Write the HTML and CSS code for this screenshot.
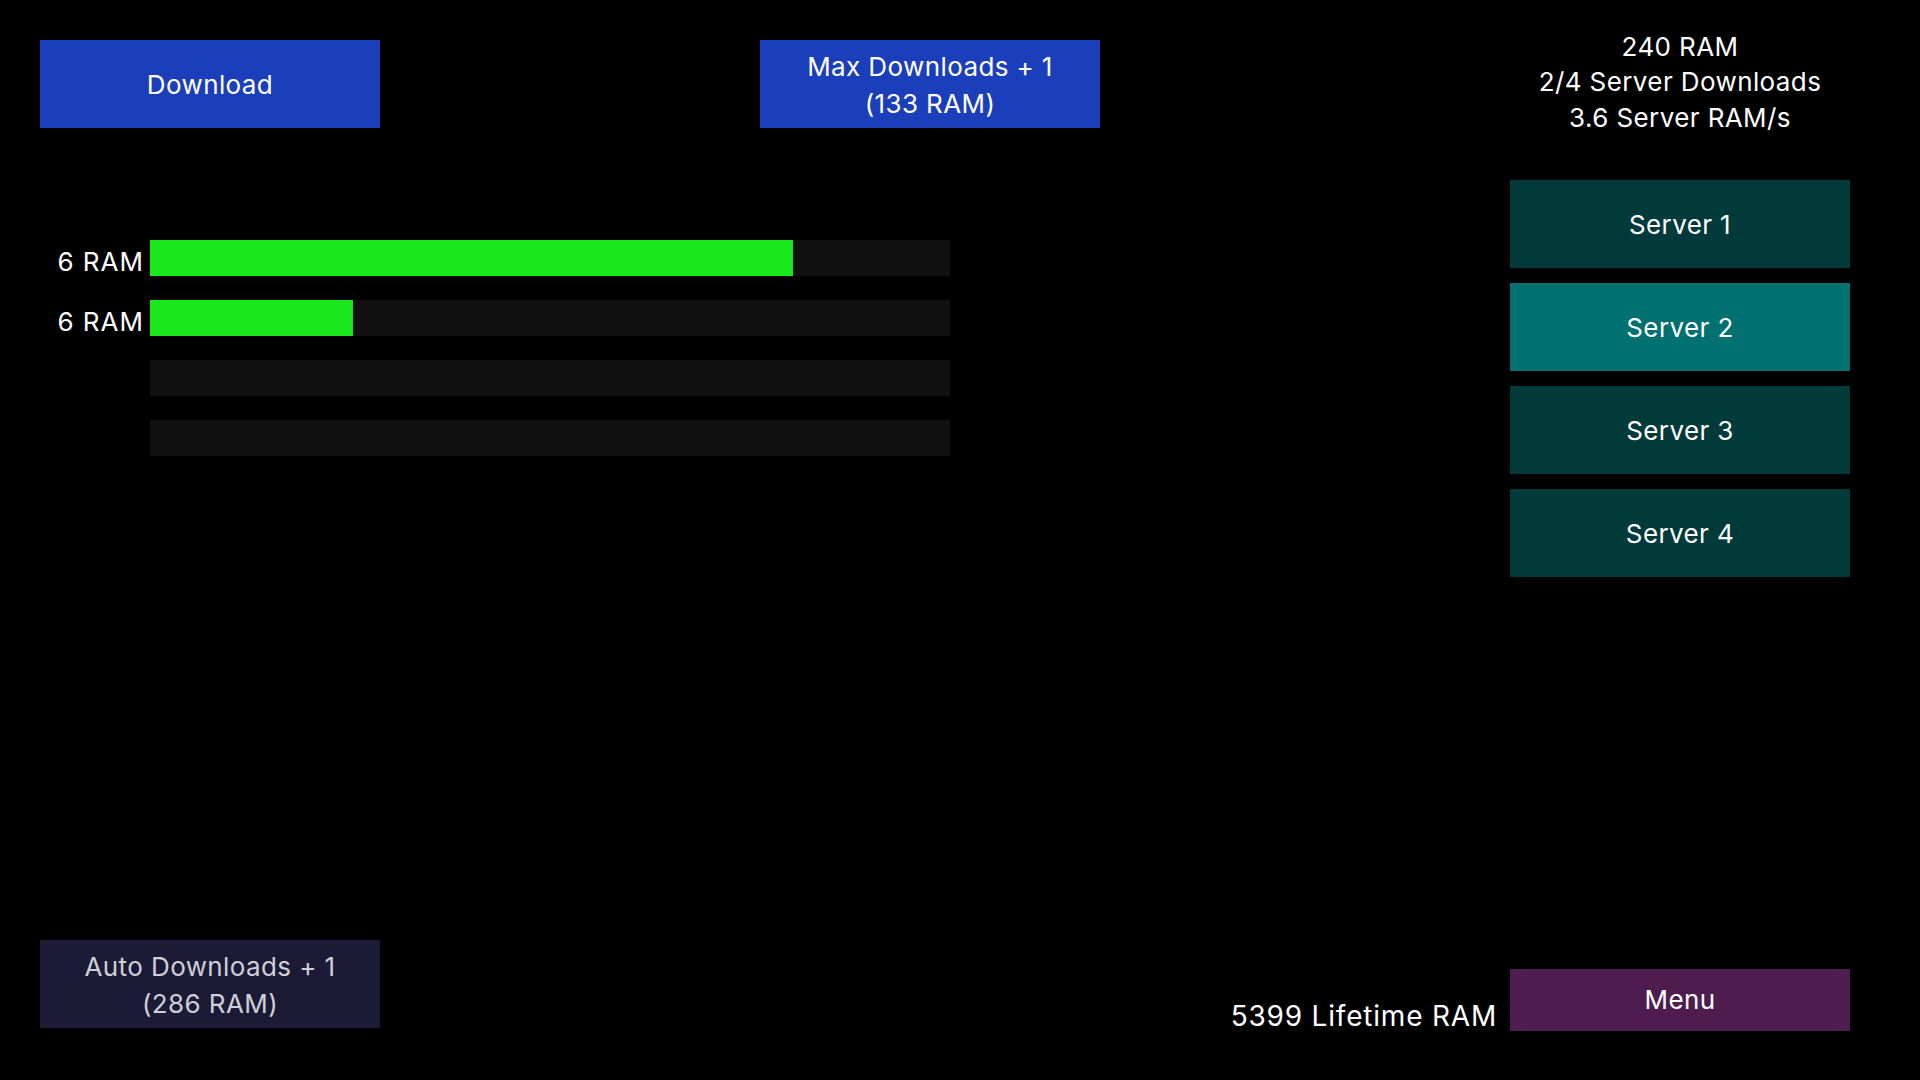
FILE: index.html
```html
<!DOCTYPE html>
<html lang="en">
<head>
<meta charset="utf-8">
<title>RAM Downloader</title>
<link rel="stylesheet" href="styles.css">
</head>
<body>
<div class="app">
  <div class="left">
    <div class="top-row">
      <button class="btn btn-blue">Download</button>
      <button class="btn btn-blue two-line">Max Downloads + 1<br>(133 RAM)</button>
    </div>
    <div class="downloads">
      <div class="dl-row">
        <span class="dl-label">6 RAM</span>
        <div class="track"><div class="fill" style="width:643px"></div></div>
      </div>
      <div class="dl-row">
        <span class="dl-label">6 RAM</span>
        <div class="track"><div class="fill" style="width:203px"></div></div>
      </div>
      <div class="dl-row">
        <span class="dl-label"></span>
        <div class="track"></div>
      </div>
      <div class="dl-row">
        <span class="dl-label"></span>
        <div class="track"></div>
      </div>
    </div>
    <button class="btn btn-navy two-line auto">Auto Downloads + 1<br>(286 RAM)</button>
  </div>
  <div class="right">
    <div class="stats">
      <div class="stat-main">240 RAM</div>
      <div class="stat-line">2/4 Server Downloads</div>
      <div class="stat-line">3.6 Server RAM/s</div>
    </div>
    <div class="servers">
      <button class="btn server">Server 1</button>
      <button class="btn server active">Server 2</button>
      <button class="btn server">Server 3</button>
      <button class="btn server">Server 4</button>
    </div>
    <div class="bottom-row">
      <span class="lifetime">5399 Lifetime RAM</span>
      <button class="btn menu">Menu</button>
    </div>
  </div>
</div>
</body>
</html>
```
FILE: styles.css
```css
html, body {
  margin: 0;
  padding: 0;
  background: #000;
}

body {
  font-family: Inter, "Open Sans", sans-serif;
  color: #fff;
}

.app {
  width: 1920px;
  height: 1080px;
  box-sizing: border-box;
  padding: 40px 70px 52px 40px;
  display: flex;
  justify-content: space-between;
}

.btn {
  border: 0;
  margin: 0;
  padding: 1px 0 0;
  box-sizing: border-box;
  font-family: inherit;
  font-size: 26px;
  letter-spacing: 0.4px;
  color: #fff;
  width: 340px;
  height: 88px;
  display: flex;
  align-items: center;
  justify-content: center;
  text-align: center;
  line-height: 37px;
}

.btn-blue {
  background: #1b3ebb;
}

.btn-navy {
  background: #1b1b38;
  color: #cfcfd6;
}

.two-line {
  padding-top: 2px;
}

.left {
  width: 1060px;
  display: flex;
  flex-direction: column;
}

.top-row {
  display: flex;
  justify-content: space-between;
}

.downloads {
  margin-top: 112px;
  display: flex;
  flex-direction: column;
  gap: 24px;
}

.dl-row {
  display: flex;
  align-items: center;
}

.dl-label {
  width: 104px;
  padding-right: 6px;
  text-align: right;
  font-size: 26px;
  letter-spacing: 1px;
  line-height: 36px;
  padding-top: 4px;
  height: 32px;
  white-space: nowrap;
}

.track {
  width: 800px;
  height: 36px;
  background: #101010;
}

.fill {
  height: 100%;
  background: #18e81c;
}

.auto {
  margin-top: auto;
}

.right {
  width: 680px;
  display: flex;
  flex-direction: column;
  align-items: flex-end;
}

.stats {
  width: 340px;
  margin-top: -10px;
  text-align: center;
  letter-spacing: 0.4px;
}

.stat-main {
  font-size: 26px;
  line-height: 34px;
}

.stat-line {
  font-size: 26px;
  line-height: 36px;
}

.servers {
  margin-top: 44px;
  width: 340px;
  display: flex;
  flex-direction: column;
  gap: 15px;
}

.server {
  background: #003a3a;
}

.server.active {
  background: #007070;
}

.bottom-row {
  margin-top: auto;
  margin-bottom: -3px;
  display: flex;
  align-items: flex-end;
  gap: 13px;
}

.lifetime {
  font-size: 28px;
  letter-spacing: 0.8px;
  line-height: 30px;
  white-space: nowrap;
}

.menu {
  height: 62px;
  background: #4e1c4e;
  padding: 0 0 1px;
}
```
